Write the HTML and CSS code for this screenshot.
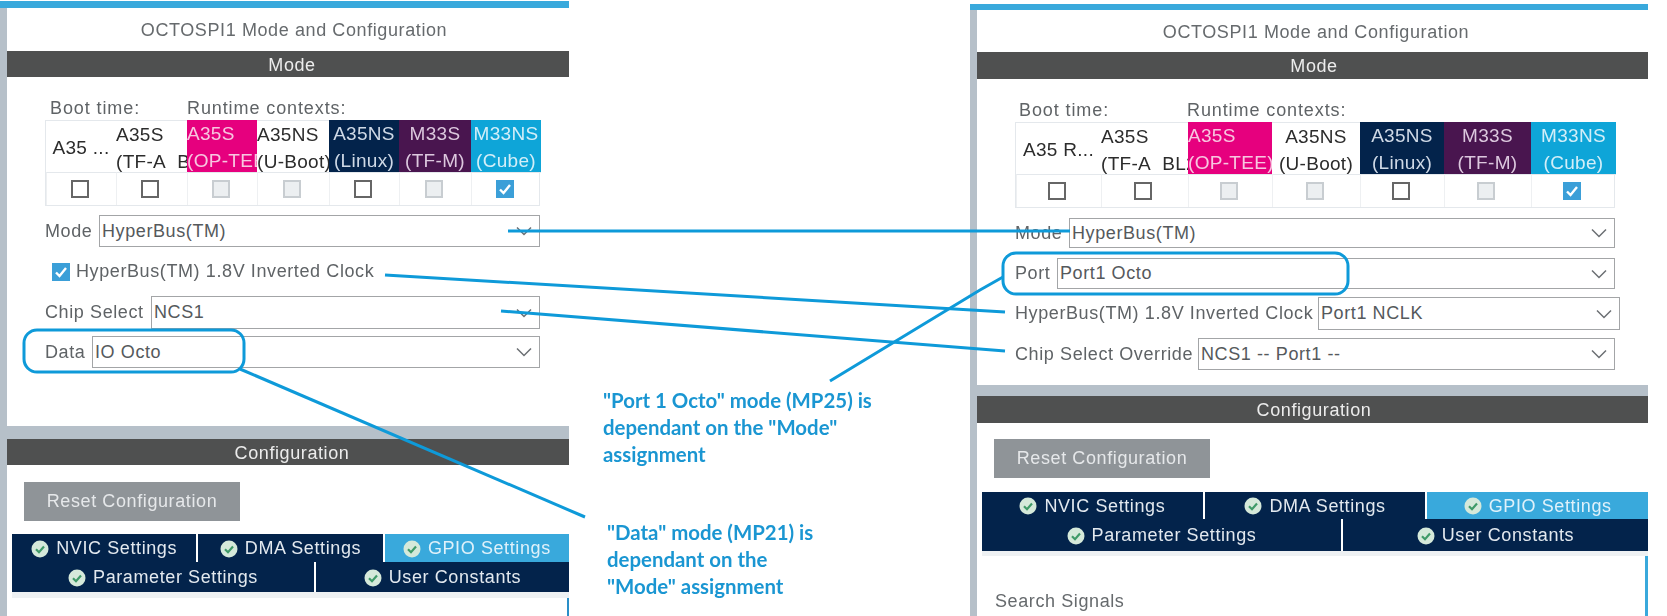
FILE: index.html
```html
<!DOCTYPE html>
<html lang="en">
<head>
<meta charset="utf-8">
<title>OCTOSPI1 Mode and Configuration</title>
<link rel="stylesheet" href="styles.css">
</head>
<body>
<svg width="0" height="0" class="defs">
  <defs>
    <symbol id="ok" viewBox="0 0 18 18"><circle cx="9" cy="9" r="8.5" fill="#d5e9da"/><path d="M5 9.2l3 3 5-5.6" fill="none" stroke="#3f9a68" stroke-width="2.2"/></symbol>
    <symbol id="chev" viewBox="0 0 16 10"><path d="M1 1.5l7 7 7-7" fill="none" stroke="#6b6f73" stroke-width="1.5"/></symbol>
    <symbol id="tick" viewBox="0 0 18 18"><path d="M4 9.5l3.5 3.5 6.5-8" fill="none" stroke="#fff" stroke-width="2.4"/></symbol>
  </defs>
</svg>
<div class="stage">
  <section class="panel panel-a">
    <div class="topbar"></div>
    <div class="inner">
      <h1 class="title">OCTOSPI1 Mode and Configuration</h1>
      <h2 class="bar">Mode</h2>
      <div class="mode">
        <div class="ctx-labels"><span class="boot">Boot time:</span><span>Runtime contexts:</span></div>
        <div class="ctx">
          <div class="hd mid"><span class="one">A35 ...</span></div>
          <div class="hd lft"><span>A35S</span><span>(TF-A&nbsp; BL2)</span></div>
          <div class="hd lft pink"><span>A35S</span><span>(OP-TEE)</span></div>
          <div class="hd lft"><span>A35NS</span><span>(U-Boot)</span></div>
          <div class="hd navy"><span>A35NS</span><span>(Linux)</span></div>
          <div class="hd plum"><span>M33S</span><span>(TF-M)</span></div>
          <div class="hd cube"><span>M33NS</span><span>(Cube)</span></div>
          <div class="ck"><i class="box"></i></div>
          <div class="ck"><i class="box"></i></div>
          <div class="ck"><i class="box off"></i></div>
          <div class="ck"><i class="box off"></i></div>
          <div class="ck"><i class="box"></i></div>
          <div class="ck"><i class="box off"></i></div>
          <div class="ck"><i class="box on"><svg><use href="#tick"/></svg></i></div>
        </div>
        <div class="row r-a1"><label class="l-mode">Mode</label><div class="sel">HyperBus(TM)<svg class="chev"><use href="#chev"/></svg></div></div>
        <div class="check-row"><i class="box on"><svg><use href="#tick"/></svg></i><span>HyperBus(TM) 1.8V Inverted Clock</span></div>
        <div class="row r-a3"><label class="l-chip">Chip Select</label><div class="sel">NCS1<svg class="chev"><use href="#chev"/></svg></div></div>
        <div class="row r-a4"><label class="l-data">Data</label><div class="sel">IO Octo<svg class="chev"><use href="#chev"/></svg></div></div>
      </div>
      <div class="band"></div>
      <h2 class="bar">Configuration</h2>
      <button class="reset" type="button">Reset Configuration</button>
      <div class="tabs">
        <div class="tabrow">
          <div class="tab"><svg class="ok"><use href="#ok"/></svg>NVIC Settings</div>
          <div class="tab"><svg class="ok"><use href="#ok"/></svg>DMA Settings</div>
          <div class="tab active"><svg class="ok"><use href="#ok"/></svg>GPIO Settings</div>
        </div>
        <div class="tabrow low">
          <div class="tab"><svg class="ok"><use href="#ok"/></svg>Parameter Settings</div>
          <div class="tab"><svg class="ok"><use href="#ok"/></svg>User Constants</div>
        </div>
      </div>
      <div class="content"></div>
    </div>
  </section>

  <section class="panel panel-b">
    <div class="topbar"></div>
    <div class="inner">
      <h1 class="title">OCTOSPI1 Mode and Configuration</h1>
      <h2 class="bar">Mode</h2>
      <div class="mode">
        <div class="ctx-labels"><span class="boot">Boot time:</span><span>Runtime contexts:</span></div>
        <div class="ctx">
          <div class="hd mid"><span class="one">A35 R...</span></div>
          <div class="hd lft"><span>A35S</span><span>(TF-A&nbsp; BL2)</span></div>
          <div class="hd lft pink"><span>A35S</span><span>(OP-TEE)</span></div>
          <div class="hd"><span>A35NS</span><span>(U-Boot)</span></div>
          <div class="hd navy"><span>A35NS</span><span>(Linux)</span></div>
          <div class="hd plum"><span>M33S</span><span>(TF-M)</span></div>
          <div class="hd cube"><span>M33NS</span><span>(Cube)</span></div>
          <div class="ck"><i class="box"></i></div>
          <div class="ck"><i class="box"></i></div>
          <div class="ck"><i class="box off"></i></div>
          <div class="ck"><i class="box off"></i></div>
          <div class="ck"><i class="box"></i></div>
          <div class="ck"><i class="box off"></i></div>
          <div class="ck"><i class="box on"><svg><use href="#tick"/></svg></i></div>
        </div>
        <div class="row r-b1"><label class="l-mode2">Mode</label><div class="sel">HyperBus(TM)<svg class="chev"><use href="#chev"/></svg></div></div>
        <div class="row r-b2"><label class="l-port">Port</label><div class="sel">Port1 Octo<svg class="chev"><use href="#chev"/></svg></div></div>
        <div class="row r-b3"><label class="l-hb">HyperBus(TM) 1.8V Inverted Clock</label><div class="sel">Port1 NCLK<svg class="chev"><use href="#chev"/></svg></div></div>
        <div class="row r-b4"><label class="l-over">Chip Select Override</label><div class="sel">NCS1 -- Port1 --<svg class="chev"><use href="#chev"/></svg></div></div>
      </div>
      <div class="band"></div>
      <h2 class="bar">Configuration</h2>
      <button class="reset" type="button">Reset Configuration</button>
      <div class="tabs">
        <div class="tabrow">
          <div class="tab"><svg class="ok"><use href="#ok"/></svg>NVIC Settings</div>
          <div class="tab"><svg class="ok"><use href="#ok"/></svg>DMA Settings</div>
          <div class="tab active"><svg class="ok"><use href="#ok"/></svg>GPIO Settings</div>
        </div>
        <div class="tabrow low">
          <div class="tab"><svg class="ok"><use href="#ok"/></svg>Parameter Settings</div>
          <div class="tab"><svg class="ok"><use href="#ok"/></svg>User Constants</div>
        </div>
      </div>
      <div class="content"><p class="search">Search Signals</p></div>
    </div>
  </section>

  <svg class="wires" viewBox="0 0 1667 616">
    <path d="M508 231H1070"/>
    <path d="M385 275L1005 312"/>
    <path d="M501 311L1005 351"/>
    <path d="M830 381L980 290L1003 277"/>
    <path d="M240 369L585 517"/>
    <rect x="24" y="330" width="220" height="42" rx="13"/>
    <rect x="1003" y="253" width="345" height="41" rx="13"/>
  </svg>
  <p class="note note-port">"Port 1 Octo" mode (MP25) is<br>dependant on the "Mode"<br>assignment</p>
  <p class="note note-data">"Data" mode (MP21) is<br>dependant on the<br>"Mode" assignment</p>
</div>
</body>
</html>
```
FILE: styles.css
```css
* { box-sizing: border-box; }
html, body { margin: 0; padding: 0; background: #fff; }
body { width: 1667px; height: 616px; overflow: hidden; font-family: "Liberation Sans", Arial, sans-serif; font-size: 18px; letter-spacing: 0.6px; color: #5f6366; }
.defs { position: absolute; }
.stage { position: relative; display: flex; width: 1667px; height: 616px; overflow: hidden; filter: blur(0.4px); }
.panel { display: flex; flex-direction: column; flex: none; }
.panel-a { width: 569px; padding-top: 1px; }
.panel-b { width: 678px; margin-left: 401px; padding-top: 4px; }
.topbar { height: 7px; background: #39a9dc; flex: none; }
.panel-b .topbar { height: 6px; }
.inner { flex: 1; border-left: 7px solid #b6c0c9; display: flex; flex-direction: column; }
.title { margin: 0; height: 43px; display: flex; align-items: center; justify-content: center; font-size: 18px; font-weight: 400; color: #666a6d; padding: 2px 0 0 12px; }
.panel-b .title { height: 42px; padding-left: 7px; }
.bar { margin: 0; height: 26px; flex: none; background: #4f5050; color: #ececec; font-size: 18px; font-weight: 400; display: flex; align-items: center; justify-content: center; padding: 2px 0 0 8px; }
.panel-b .bar { height: 27px; padding-left: 3px; }

.mode { height: 349px; flex: none; padding-left: 38px; width: 533px; }
.panel-b .mode { height: 306px; padding-left: 38px; width: 638px; }
.ctx-labels { display: flex; height: 43px; padding: 20px 0 0 5px; line-height: 22px; letter-spacing: 0.9px; }
.panel-b .ctx-labels { padding-left: 4px; }
.boot { width: 137px; flex: none; }
.panel-b .boot { width: 168px; }
.ctx { display: grid; grid-template-columns: 70px 71px 70px 72px 70px 72px 70px; grid-template-rows: 52px 33px; border: 1px solid #e4e8ec; border-width: 0 1px 1px 1px; }
.panel-b .ctx { grid-template-columns: 85px 87px 84px 88px 84px 87px 85px; }
.hd { display: flex; flex-direction: column; justify-content: center; align-items: center; overflow: hidden; white-space: nowrap; color: #2c2c2c; font-size: 19px; line-height: 27px; letter-spacing: 0.3px; border-top: 1px solid #e4e8ec; padding-top: 2px; }
.hd.lft { align-items: flex-start; }
.hd .one { line-height: 22px; }
.pink { background: #e6007e; color: #f7c6e0; border-top: 0; }
.navy { background: #03234b; color: #cfd9e6; border-top: 0; }
.plum { background: #49154f; color: #dcc8de; border-top: 0; }
.cube { background: #0ea5d8; color: #d3eef8; border-top: 0; }
.ck { display: flex; align-items: center; justify-content: center; border-top: 1px solid #e4e8ec; border-left: 1px solid #eef0f2; padding-right: 4px; }
.box { display: block; width: 18px; height: 18px; flex: none; border: 2px solid #666; background: #fff; }
.box.off { border-color: #c8cdd1; background: #eceff1; }
.box.on { border: 0; background: #3b9fd8; }
.box svg { display: block; width: 18px; height: 18px; }

.row { display: flex; align-items: center; }
.row label { flex: none; }
.sel { flex: 1; position: relative; height: 100%; display: flex; align-items: center; padding-left: 2px; border: 1.5px solid #a3a5a7; color: #55595c; background: #fff; min-width: 0; }
.chev { position: absolute; right: 7px; top: 50%; margin-top: -5px; width: 16px; height: 10px; }
.r-a1 { height: 32px; margin-top: 9px; }
.r-a3 { height: 33px; margin-top: 0; }
.r-a4 { height: 32px; margin-top: 7px; }
.l-mode { width: 54px; }
.l-chip { width: 106px; }
.l-data { width: 47px; }
.check-row { height: 49px; display: flex; align-items: center; gap: 6px; padding-left: 7px; }
.r-b1 { height: 30px; margin-top: 10px; }
.r-b2 { height: 31px; margin-top: 10px; }
.r-b3 { height: 33px; margin-top: 8px; width: 605px; }
.r-b4 { height: 32px; margin-top: 8px; }
.l-mode2 { width: 54px; }
.l-port { width: 42px; }
.l-hb { width: 303px; }
.l-over { width: 183px; }

.band { height: 13px; background: #b6c0c9; flex: none; }
.panel-b .band { height: 11px; }
.reset { width: 216px; height: 39px; flex: none; margin: 17px 0 13px 17px; padding: 0; border: 0; background: #8f9498; color: #e6e8ea; font: inherit; letter-spacing: 0.6px; }
.panel-b .reset { margin: 16px 0 14px 17px; }
.tabs { margin-left: 5px; flex: none; border-bottom: 6px solid #eef1f3; }
.panel-b .tabs { border-bottom-width: 5px; }
.tabrow { display: flex; gap: 2px; height: 28px; }
.panel-b .tabrow { height: 27px; }
.tabrow.low { height: 30px; }
.panel-b .tabrow.low { height: 32px; }
.tab { flex: 1 1 0; min-width: 0; display: flex; align-items: center; justify-content: center; gap: 7px; background: #03234b; color: #e3e9ef; white-space: nowrap; padding-top: 1px; }
.tab.active { background: #39a9dc; color: #dff1fa; }
.tabrow.low .tab:first-child { flex: none; width: 302px; }
.panel-b .tabrow.low .tab:first-child { width: 359px; }
.ok { width: 18px; height: 18px; flex: none; }
.content { flex: 1; margin-left: 5px; border-right: 2px solid #2a8fc8; }
.panel-b .content { border-right: 3px solid #39a9dc; }
.search { margin: 36px 0 0 13px; line-height: 18px; color: #666a6d; }

.wires { position: absolute; left: 0; top: 0; width: 1667px; height: 616px; }
.wires path, .wires rect { fill: none; stroke: #0e9ad9; stroke-width: 3; }
.note { position: absolute; margin: 0; font-family: Lato, "Open Sans", sans-serif; font-weight: 700; font-size: 20.4px; line-height: 27px; letter-spacing: 0; color: #1a96d2; white-space: nowrap; }
.note-port { left: 603px; top: 387px; }
.note-data { left: 607px; top: 519px; }
```
